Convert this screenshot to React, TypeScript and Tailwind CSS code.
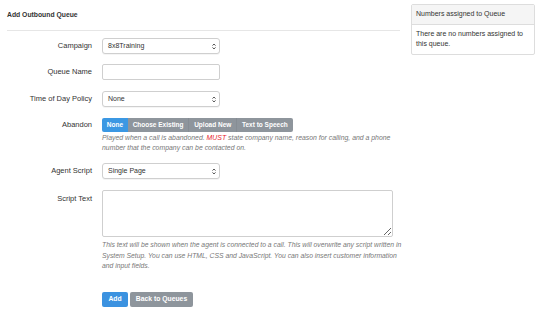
import React from "react";

function Arrows() {
  return (
    <svg width="4" height="7" viewBox="0 0 4 7" className="text-[#444]">
      <path d="M0.5 2.6 L2 1 L3.5 2.6" fill="none" stroke="currentColor" strokeWidth="0.9" />
      <path d="M0.5 4.4 L2 6 L3.5 4.4" fill="none" stroke="currentColor" strokeWidth="0.9" />
    </svg>
  );
}

function FakeSelect({ value }: { value: string }) {
  return (
    <div className="flex h-[16px] w-[118px] items-center justify-between rounded-[3px] border border-[#cfcfcf] bg-white pl-[5px] pr-[3px] text-[7px] text-[#333] shadow-[0_1px_0_rgba(0,0,0,0.04)]">
      <span>{value}</span>
      <Arrows />
    </div>
  );
}

function Row({ label, children, top = false }: { label: string; children: React.ReactNode; top?: boolean }) {
  return (
    <div className={`flex ${top ? "items-start" : "items-center"}`}>
      <div className={`w-[85px] shrink-0 text-right text-[7.5px] text-[#333] ${top ? "pt-[3px]" : ""}`}>{label}</div>
      <div className="ml-[10px]">{children}</div>
    </div>
  );
}

export default function App() {
  const modes = ["None", "Choose Existing", "Upload New", "Text to Speech"];
  return (
    <div className="flex h-[315px] w-[540px] bg-white font-['Liberation_Sans',Arial,sans-serif] text-[#333]">
      <div className="ml-[7px] w-[393px]">
        <div className="flex h-[31px] items-center border-b border-[#e6e6e6] text-[6.8px] font-bold">
          Add Outbound Queue
        </div>

        <div className="pt-[7px]">
          <Row label="Campaign">
            <FakeSelect value="8x8Training" />
          </Row>

          <div className="mt-[10px]">
            <Row label="Queue Name">
              <div className="h-[16px] w-[118px] rounded-[2px] border border-[#cfcfcf] bg-white" />
            </Row>
          </div>

          <div className="mt-[11px]">
            <Row label="Time of Day Policy">
              <FakeSelect value="None" />
            </Row>
          </div>

          <div className="mt-[11px] flex items-start">
            <div className="flex h-[14px] w-[85px] shrink-0 items-center justify-end text-[7.5px]">Abandon</div>
            <div className="ml-[10px]">
              <div className="flex h-[14px] w-fit overflow-hidden rounded-[2px] text-[6.5px] font-bold leading-none text-white">
                {modes.map((m, i) => (
                  <div
                    key={m}
                    className={`flex items-center px-[4.8px] ${i === 0 ? "bg-[#3b98e3]" : "bg-[#8e959c]"} ${i > 1 ? "border-l border-[#868d94]" : ""}`}
                  >
                    {m}
                  </div>
                ))}
              </div>
              <p className="mt-[1px] w-[300px] text-[6.9px] italic leading-[10px] text-[#777]">
                Played when a call is abandoned. <span className="text-[#e8262b]">MUST</span> state company name, reason for
                calling, and a phone number that the company can be contacted on.
              </p>
            </div>
          </div>

          <div className="mt-[10px]">
            <Row label="Agent Script">
              <FakeSelect value="Single Page" />
            </Row>
          </div>

          <div className="mt-[11px]">
            <Row label="Script Text" top>
              <textarea className="block h-[47px] w-[291px] rounded-[2px] border border-[#cfcfcf] bg-white outline-none" />
              <p className="mt-[3px] w-[304px] text-[6.8px] italic leading-[10.5px] text-[#777]">
                This text will be shown when the agent is connected to a call. This will overwrite any script written in
                System Setup. You can use HTML, CSS and JavaScript. You can also insert customer information and input
                fields.
              </p>
            </Row>
          </div>

          <div className="mt-[20px] flex pl-[95px]">
            <button className="h-[15px] w-[26px] rounded-[2px] bg-[#3b92e0] text-[6.8px] font-bold text-white">Add</button>
            <button className="ml-[2px] h-[15px] w-[63px] rounded-[2px] bg-[#8e959c] text-[6.8px] font-bold text-white">
              Back to Queues
            </button>
          </div>
        </div>
      </div>

      <div className="ml-[11px] mt-[4px] h-[51px] w-[124px] rounded-[2px] border border-[#dddddd]">
        <div className="flex h-[20px] items-center border-b border-[#dddddd] bg-[#f5f5f5] px-[4px] text-[7px] font-medium">
          Numbers assigned to Queue
        </div>
        <p className="px-[4px] pt-[4px] text-[7px] leading-[10px]">There are no numbers assigned to this queue.</p>
      </div>
    </div>
  );
}
